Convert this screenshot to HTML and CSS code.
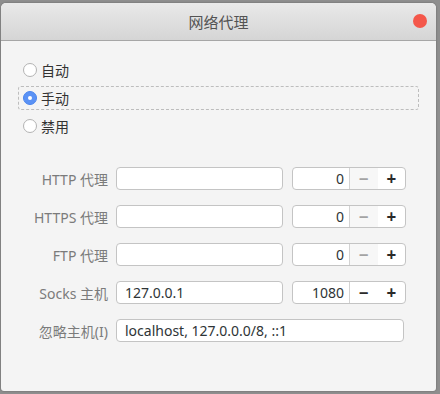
FILE: index.html
```html
<!DOCTYPE html>
<html lang="zh-CN">
<head>
    <meta charset="UTF-8">
    <title>网络代理</title>
    <link rel="stylesheet" href="styles.css">
</head>
<body>
    <div class="window">
        <div class="titlebar">
            <span class="title">网络代理</span>
            <span class="close"></span>
        </div>

        <div class="content">
            <div class="modes">
                <label class="mode"><span class="radio"></span>自动</label>
                <label class="mode focused"><span class="radio checked"></span>手动</label>
                <label class="mode"><span class="radio"></span>禁用</label>
            </div>

            <div class="form">
                <div class="label">HTTP 代理</div>
                <div class="entry"></div>
                <div class="spin disabled">
                    <span class="value">0</span>
                    <span class="btn minus">&minus;</span>
                    <span class="btn plus">+</span>
                </div>

                <div class="label">HTTPS 代理</div>
                <div class="entry"></div>
                <div class="spin disabled">
                    <span class="value">0</span>
                    <span class="btn minus">&minus;</span>
                    <span class="btn plus">+</span>
                </div>

                <div class="label">FTP 代理</div>
                <div class="entry"></div>
                <div class="spin disabled">
                    <span class="value">0</span>
                    <span class="btn minus">&minus;</span>
                    <span class="btn plus">+</span>
                </div>

                <div class="label">Socks 主机</div>
                <div class="entry">127.0.0.1</div>
                <div class="spin">
                    <span class="value">1080</span>
                    <span class="btn minus">&minus;</span>
                    <span class="btn plus">+</span>
                </div>

                <div class="label">忽略主机(I)</div>
                <div class="entry wide">localhost, 127.0.0.0/8, ::1</div>
            </div>
        </div>
    </div>
</body>
</html>
```

FILE: styles.css
```css
* {
    margin: 0;
    padding: 0;
    box-sizing: border-box;
}

body {
    background-color: #8e8e8e;
    font-family: 'Noto Sans', 'Noto Sans CJK SC', sans-serif;
    font-size: 14px;
    color: #3c3c3c;
    width: 440px;
    height: 394px;
    overflow: hidden;
}

.window {
    margin: 3px 0 0 1px;
    width: 435px;
    height: 388px;
    background-color: #f4f4f4;
    border-radius: 5px 5px 3px 3px;
    box-shadow: 0 0 2px rgba(0, 0, 0, 0.35);
    overflow: hidden;
}

.titlebar {
    height: 38px;
    display: flex;
    align-items: center;
    justify-content: center;
    position: relative;
    background: linear-gradient(#e9e9e9, #d5d5d5);
    border-bottom: 1px solid #a6a6a6;
}

.title {
    color: #535353;
    font-size: 15px;
}

.close {
    position: absolute;
    right: 9px;
    top: 11px;
    width: 14px;
    height: 14px;
    border-radius: 50%;
    background-color: #f4574a;
}

.content {
    padding: 17px 0 0 17px;
}

.modes {
    display: flex;
    flex-direction: column;
    gap: 4px;
    width: 401px;
}

.mode {
    height: 24px;
    display: flex;
    align-items: center;
    gap: 4px;
    padding-left: 4px;
    border: 1px dashed transparent;
    border-radius: 3px;
    color: #333;
}

.mode.focused {
    border-color: #bdbdbd;
}

.radio {
    width: 14px;
    height: 14px;
    border-radius: 50%;
    border: 1px solid #b3b3b3;
    background-color: #fff;
    display: flex;
    align-items: center;
    justify-content: center;
}

.radio.checked {
    border-color: #4a85ee;
    background-color: #5a92f5;
}

.radio.checked::after {
    content: "";
    width: 4px;
    height: 4px;
    border-radius: 50%;
    background-color: #fff;
}

.form {
    margin-top: 29px;
    display: grid;
    grid-template-columns: 90px 167px 115px;
    grid-auto-rows: 23px;
    column-gap: 8px;
    row-gap: 15px;
}

.form .spin {
    margin-left: 1px;
}

.label {
    color: #7b7b7b;
    text-align: right;
    display: flex;
    align-items: center;
    justify-content: flex-end;
    white-space: nowrap;
}

.entry {
    background-color: #fff;
    border: 1px solid #c4c4c4;
    border-radius: 4px;
    padding: 0 8px;
    display: flex;
    align-items: center;
    color: #2e3436;
}

.entry.wide {
    grid-column: 2 / 4;
    margin-right: 2px;
}

.spin {
    display: flex;
    background-color: #fff;
    border: 1px solid #c4c4c4;
    border-radius: 4px;
    overflow: hidden;
}

.spin .value {
    width: 57px;
    border-right: 1px solid #d3d3d3;
    padding-right: 5px;
    display: flex;
    align-items: center;
    justify-content: flex-end;
    color: #2e3436;
}

.spin .btn {
    flex: 1;
    display: flex;
    align-items: center;
    justify-content: center;
    font-size: 17px;
    font-weight: bold;
    color: #2a2a2a;
}

.spin.disabled .minus {
    background-color: #f7f7f7;
    color: #a3a3a3;
}
```
